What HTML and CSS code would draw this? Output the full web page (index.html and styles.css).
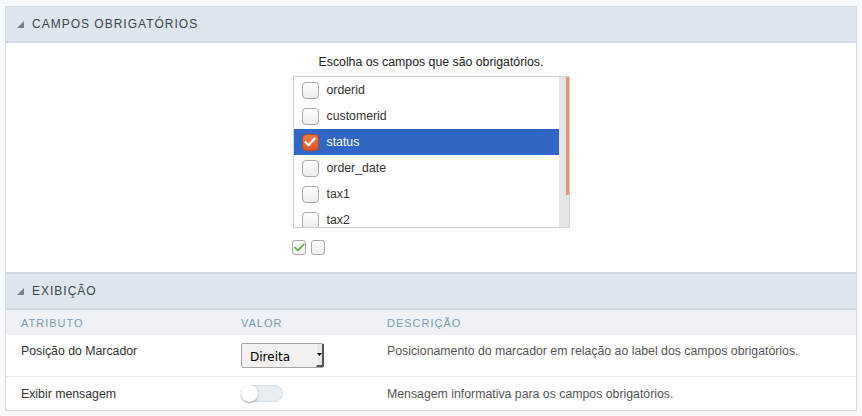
FILE: index.html
```html
<!DOCTYPE html>
<html lang="pt">
<head>
<meta charset="utf-8">
<title>Campos obrigatórios</title>
<link rel="stylesheet" href="styles.css">
</head>
<body>
<div class="panel">
  <div class="sec-head">
    <svg class="tri" width="7" height="7" viewBox="0 0 7 7"><polygon points="7,0 7,7 0,7" fill="#76818b"/></svg>
    <span>CAMPOS OBRIGATÓRIOS</span>
  </div>
  <div class="sec-body">
    <div class="hint">Escolha os campos que são obrigatórios.</div>
    <div class="listbox">
      <div class="items">
        <div class="item"><span class="cb"></span><span>orderid</span></div>
        <div class="item"><span class="cb"></span><span>customerid</span></div>
        <div class="item sel"><span class="cb on"><svg width="12" height="10" viewBox="0 0 12 10"><path d="M1.5 5.2 L4.6 8.2 L10.6 1.6" fill="none" stroke="#fff" stroke-width="2.2" stroke-linecap="round" stroke-linejoin="round"/></svg></span><span>status</span></div>
        <div class="item"><span class="cb"></span><span>order_date</span></div>
        <div class="item"><span class="cb"></span><span>tax1</span></div>
        <div class="item"><span class="cb"></span><span>tax2</span></div>
      </div>
      <div class="scroll"><div class="thumb"></div></div>
    </div>
    <div class="tools">
      <span class="mini"><svg width="11" height="9" viewBox="0 0 11 9"><path d="M1 4.6 L4 7.4 L10 1.2" fill="none" stroke="#5aa83c" stroke-width="1.6" stroke-linecap="round" stroke-linejoin="round"/></svg></span>
      <span class="mini"></span>
    </div>
  </div>
  <div class="sec-head second">
    <svg class="tri" width="7" height="7" viewBox="0 0 7 7"><polygon points="7,0 7,7 0,7" fill="#76818b"/></svg>
    <span>EXIBIÇÃO</span>
  </div>
  <div class="trow thead">
    <div class="c1">ATRIBUTO</div>
    <div class="c2">VALOR</div>
    <div class="c3">DESCRIÇÃO</div>
  </div>
  <div class="trow r1">
    <div class="c1">Posição do Marcador</div>
    <div class="c2"><div class="select"><span>Direita</span><span class="arrow"><svg width="5" height="3" viewBox="0 0 5 3"><polygon points="0,0 5,0 2.5,3" fill="#000"/></svg></span></div></div>
    <div class="c3">Posicionamento do marcador em relação ao label dos campos obrigatórios.</div>
  </div>
  <div class="trow r2">
    <div class="c1">Exibir mensagem</div>
    <div class="c2"><div class="toggle"><span class="knob"></span></div></div>
    <div class="c3">Mensagem informativa para os campos obrigatórios.</div>
  </div>
</div>
</body>
</html>
```

FILE: styles.css
```css
* { box-sizing: border-box; }
html, body { margin: 0; padding: 0; }
body {
  background: #f7f9fb;
  font-family: "Liberation Sans", Arial, sans-serif;
  padding: 6px 5px 0 5px;
  color: #333;
}
.panel {
  border: 1px solid #d3dce3;
  background: #fff;
  width: 852px;
}
.sec-head {
  height: 36px;
  background: #dfe6ed;
  border-bottom: 2px solid #cfd9e1;
  display: flex;
  align-items: center;
  padding-left: 11px;
  font-size: 12px;
  letter-spacing: 1px;
  color: #3b4651;
}
.sec-head .tri { margin-right: 8px; margin-top: 1px; }
.sec-head.second {
  border-top: 2px solid #cfd9e1;
  height: 38px;
}
.sec-body {
  height: 229px;
  display: flex;
  flex-direction: column;
  align-items: center;
  padding-top: 12px;
}
.hint {
  font-size: 12.3px;
  line-height: 14px;
  color: #222;
}
.listbox {
  margin-top: 7px;
  width: 277px;
  height: 152px;
  border: 1px solid #cdd6dd;
  display: flex;
}
.items {
  flex: 1;
  overflow: hidden;
}
.item {
  height: 26px;
  display: flex;
  align-items: center;
  padding-left: 8px;
  font-size: 12.3px;
  color: #333;
}
.item.sel { background: #3067c6; color: #fff; }
.cb {
  width: 17px;
  height: 17px;
  border: 1px solid #a9a9a9;
  border-radius: 4px;
  background: linear-gradient(#ffffff, #ececec);
  margin-right: 8px;
  display: flex;
  align-items: center;
  justify-content: center;
  flex: none;
}
.cb.on {
  background: linear-gradient(#f07a4a, #d9552a);
  border-color: #b8461f;
}
.scroll {
  width: 10px;
  background: #e6e6e6;
  position: relative;
}
.thumb {
  position: absolute;
  right: 0;
  top: 0;
  width: 3px;
  height: 118px;
  background: #f0906a;
}
.tools {
  margin-top: 12px;
  margin-left: -245px;
  display: flex;
  gap: 5px;
}
.mini {
  width: 14px;
  height: 15px;
  border: 1px solid #a9a9a9;
  border-radius: 3px;
  background: linear-gradient(#ffffff, #eeeeee);
  display: flex;
  align-items: center;
  justify-content: center;
}
.trow {
  display: flex;
  font-size: 12.3px;
}
.c1 { width: 235px; padding-left: 15px; }
.c2 { width: 146px; }
.c3 { flex: 1; }
.thead {
  height: 25px;
  background: #eef2f6;
  align-items: center;
  color: #7b9bb3;
  letter-spacing: 1px;
  font-size: 11px;
}
.r1 {
  height: 42px;
  border-bottom: 1px solid #e8edf1;
  align-items: flex-start;
  padding-top: 9px;
  color: #333;
}
.r1 .c3 { color: #555; }
.r1 .c2 { margin-top: -1px; }
.r2 {
  height: 33px;
  align-items: center;
  color: #333;
}
.r2 .c3 { color: #555; }
.select {
  width: 83px;
  height: 25px;
  border: 1px solid #a7a7a7;
  border-radius: 2px;
  background: #f2f1ef;
  display: flex;
  align-items: center;
  justify-content: space-between;
  padding-left: 8px;
  font-family: "DejaVu Sans", sans-serif;
  font-size: 12px;
  color: #000;
}
.select span:first-child { margin-top: 2px; }
.arrow {
  width: 8px;
  height: 23px;
  border-left: 1px solid #f8f8f8;
  border-right: 2px solid #555;
  border-bottom: 2px solid #555;
  background: #e8e8e8;
  display: flex;
  align-items: center;
  justify-content: center;
  margin-right: -1px;
  margin-top: -1px;
}
.toggle {
  width: 42px;
  height: 17px;
  border-radius: 9px;
  background: #e9eef2;
  border: 1px solid #d6dee4;
  position: relative;
}
.knob {
  position: absolute;
  left: -1px;
  top: -1px;
  width: 17px;
  height: 17px;
  border-radius: 50%;
  background: #fff;
  box-shadow: 0 1px 2px rgba(0,0,0,0.35);
}
```
